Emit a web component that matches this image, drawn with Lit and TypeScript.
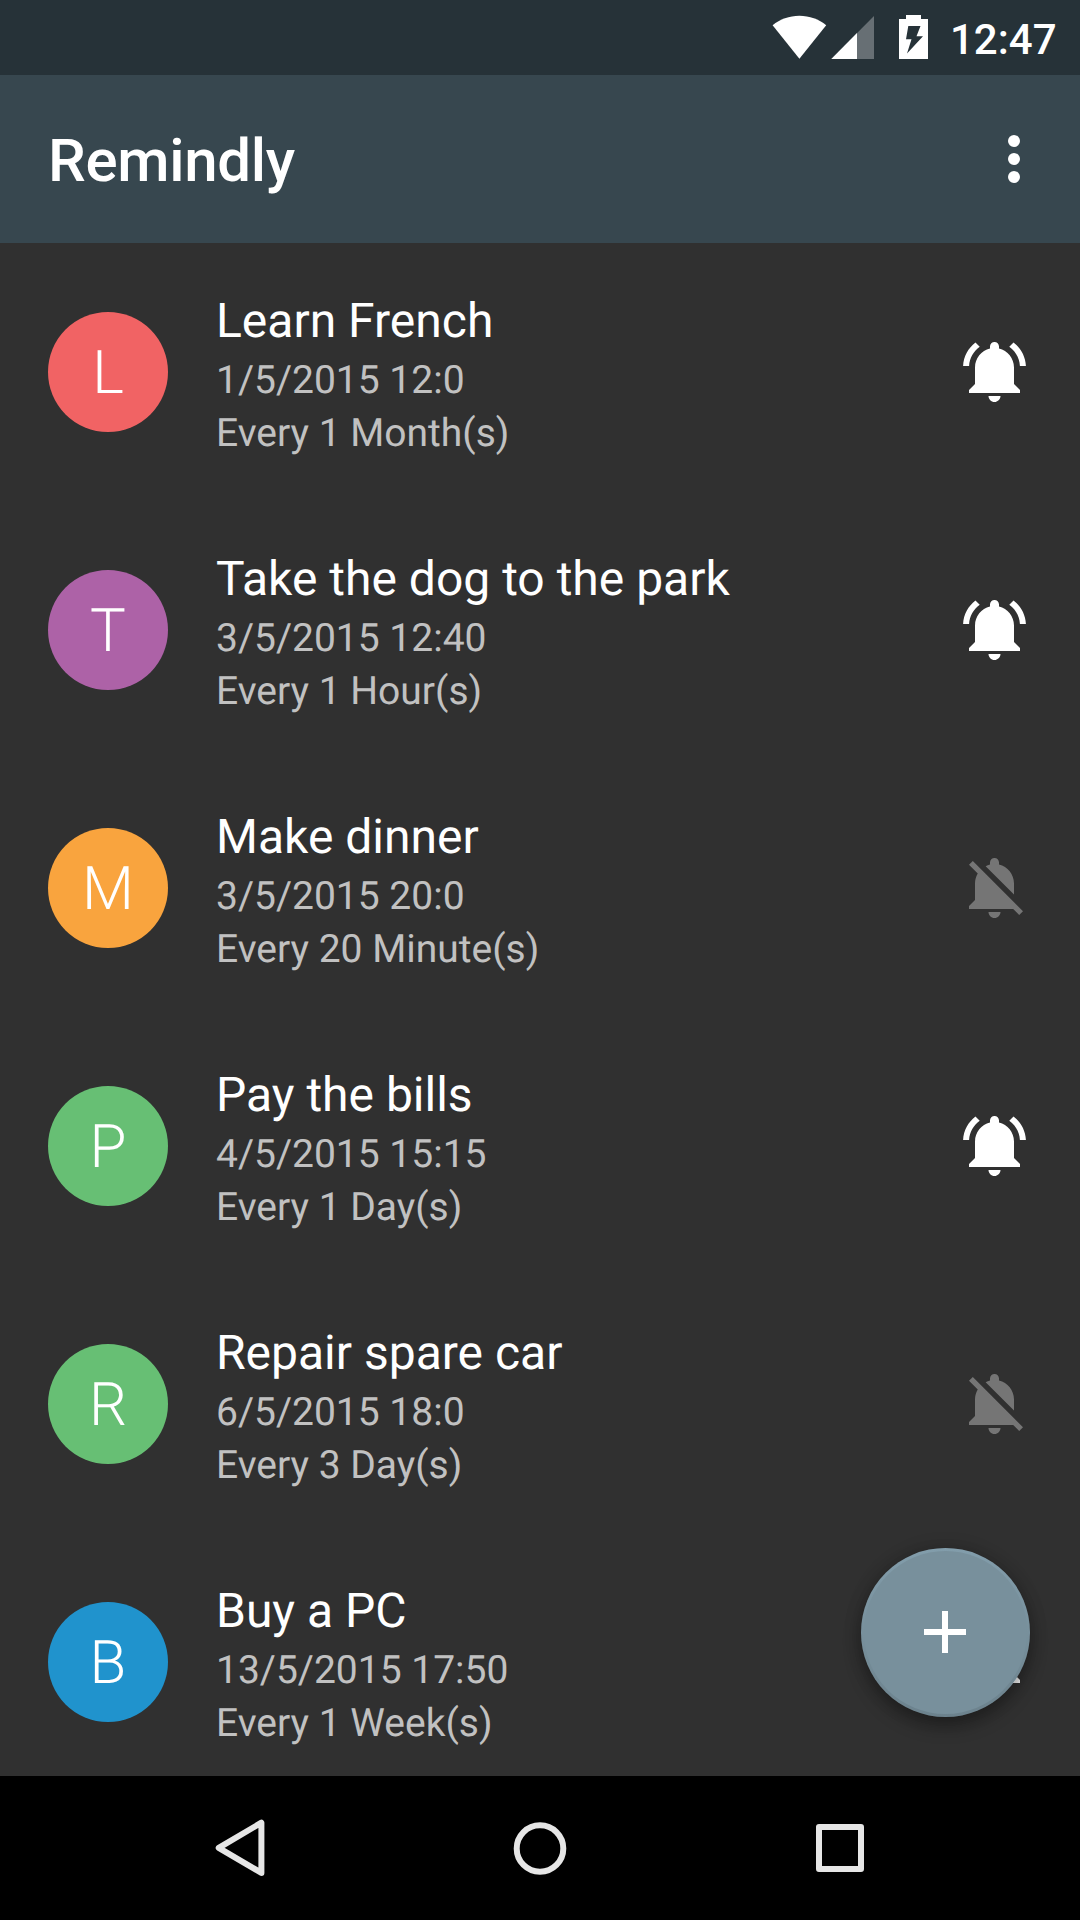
import { LitElement, html, css, svg } from "lit";
import { customElement, property } from "lit/decorators.js";

interface Reminder {
  title: string;
  when: string;
  repeat: string;
  color: string;
  active: boolean;
}

const REMINDERS: Reminder[] = [
  { title: "Learn French", when: "1/5/2015 12:0", repeat: "Every 1 Month(s)", color: "#f16364", active: true },
  { title: "Take the dog to the park", when: "3/5/2015 12:40", repeat: "Every 1 Hour(s)", color: "#ad62a7", active: true },
  { title: "Make dinner", when: "3/5/2015 20:0", repeat: "Every 20 Minute(s)", color: "#f9a43e", active: false },
  { title: "Pay the bills", when: "4/5/2015 15:15", repeat: "Every 1 Day(s)", color: "#67bf74", active: true },
  { title: "Repair spare car", when: "6/5/2015 18:0", repeat: "Every 3 Day(s)", color: "#67bf74", active: false },
  { title: "Buy a PC", when: "13/5/2015 17:50", repeat: "Every 1 Week(s)", color: "#2093cd", active: true },
];

const BELL_ACTIVE = svg`<path d="M6.58 3.58L5.15 2.15C2.76 3.97 1.18 6.8 1.03 10h2c.15-2.65 1.51-4.97 3.55-6.42zM19.97 10h2c-.15-3.2-1.73-6.03-4.13-7.85l-1.42 1.42c2.02 1.45 3.39 3.77 3.55 6.43zm-1.97.5c0-3.07-2.13-5.64-5-6.32V3.5c0-.83-.67-1.5-1.5-1.5S10 2.67 10 3.5v.68c-2.87.68-5 3.25-5 6.32V16l-2 2v1h17v-1l-2-2v-5.5zM11.5 22c.14 0 .27-.01.4-.04.65-.13 1.19-.58 1.44-1.18.1-.24.16-.5.16-.78h-4c.01 1.1.9 2 2 2z"/>`;
const BELL_OFF = svg`<path d="M11.5 22c1.1 0 2-.9 2-2h-4c0 1.1.9 2 2 2zM18 10.5c0-3.07-2.13-5.64-5-6.32V3.5c0-.83-.67-1.5-1.5-1.5S10 2.67 10 3.5v.68c-.51.12-.99.32-1.45.56L18 14.18V10.5zm-.27 8.5l2 2L21 19.73 4.27 3 3 4.27l2.92 2.92C5.34 8.16 5 9.29 5 10.5V16l-2 2v1h14.73z"/>`;

@customElement("status-bar")
class StatusBar extends LitElement {
  static styles = css`
    :host {
      display: flex;
      justify-content: flex-end;
      height: 75px;
      box-sizing: border-box;
      padding-right: 25px;
      background: #263238;
      color: #fff;
    }
    svg {
      display: block;
      height: 75px;
    }
    .time {
      font: 500 42px/80px Roboto, sans-serif;
      width: 105px;
      text-align: right;
      white-space: nowrap;
    }
  `;
  render() {
    return html`
      <svg width="180" height="75" viewBox="770 0 180 75" fill="#fff">
        <path d="M799.4 58.8 772.6 25.3C780 19.2 789.3 15.8 799.4 15.8S818.8 19.2 826.2 25.3Z" />
        <path d="M874 16V59H831.3Z" fill-opacity=".3" />
        <path d="M857 33.1V59H831.3Z" />
        <path
          fill-rule="evenodd"
          d="M906 15H921V19H928V59H899V19H906ZM908.3 26 906 39.300H911.500L907 53.500 923 36.300H916.500L920.500 26Z"
        />
      </svg>
      <span class="time">12:47</span>
    `;
  }
}

@customElement("app-toolbar")
class AppToolbar extends LitElement {
  static styles = css`
    :host {
      display: flex;
      align-items: center;
      justify-content: space-between;
      height: 168px;
      box-sizing: border-box;
      padding: 0 30px 0 48px;
      background: #37474f;
      color: #fff;
    }
    .title {
      margin: 0;
      padding-top: 3px;
      font: 500 60px/70px Roboto, sans-serif;
      letter-spacing: -0.3px;
    }
    .more {
      display: block;
      fill: #fff;
    }
  `;
  render() {
    return html`
      <h1 class="title">Remindly</h1>
      <svg class="more" width="72" height="72" viewBox="0 0 24 24">
        <circle cx="12" cy="6" r="2" />
        <circle cx="12" cy="12" r="2" />
        <circle cx="12" cy="18" r="2" />
      </svg>
    `;
  }
}

@customElement("reminder-row")
class ReminderRow extends LitElement {
  @property({ attribute: false }) reminder!: Reminder;

  static styles = css`
    :host {
      display: flex;
      align-items: center;
      height: 258px;
      flex: none;
      box-sizing: border-box;
      padding: 0 48px;
      font-family: Roboto, sans-serif;
      text-rendering: geometricPrecision;
    }
    .avatar {
      width: 120px;
      height: 120px;
      border-radius: 50%;
      color: #fff;
      font-size: 60px;
      font-weight: 300;
      line-height: 122px;
      text-align: center;
      flex: none;
    }
    .text {
      flex: 1;
      padding-left: 48px;
      padding-top: 7px;
      white-space: nowrap;
    }
    .title {
      color: #fff;
      font-size: 48px;
      line-height: 60px;
      margin-bottom: 3px;
    }
    .detail {
      color: #c1c1c1;
      font-size: 39px;
      line-height: 53px;
    }
    .bell {
      display: block;
      flex: none;
      fill: #757575;
    }
    .bell.on {
      fill: #fff;
    }
  `;
  render() {
    const r = this.reminder;
    return html`
      <div class="avatar" style="background:${r.color}">${r.title[0]}</div>
      <div class="text">
        <div class="title">${r.title}</div>
        <div class="detail">${r.when}</div>
        <div class="detail">${r.repeat}</div>
      </div>
      <svg class="bell ${r.active ? "on" : ""}" width="72" height="72" viewBox="0 0 24 24">
        ${r.active ? BELL_ACTIVE : BELL_OFF}
      </svg>
    `;
  }
}

@customElement("nav-bar")
class NavBar extends LitElement {
  static styles = css`
    :host {
      display: flex;
      align-items: center;
      justify-content: center;
      gap: 156px;
      height: 144px;
      flex: none;
      background: #000;
    }
    svg {
      display: block;
      fill: none;
      stroke: #e6e6e6;
      stroke-width: 6;
      stroke-linejoin: round;
    }
  `;
  render() {
    return html`
      <svg width="144" height="144" viewBox="168 1776 144 144">
        <path d="M218.7 1847.8 261.400 1822.700V1872.900Z" />
      </svg>
      <svg width="144" height="144" viewBox="468 1776 144 144">
        <circle cx="540" cy="1848.5" r="23.3" />
      </svg>
      <svg width="144" height="144" viewBox="768 1776 144 144">
        <rect x="819" y="1827" width="42" height="42" />
      </svg>
    `;
  }
}

@customElement("app-root")
class AppRoot extends LitElement {
  static styles = css`
    :host {
      display: flex;
      flex-direction: column;
      position: relative;
      width: 1080px;
      height: 1920px;
      overflow: hidden;
      background: #303030;
    }
    status-bar,
    app-toolbar {
      flex: none;
    }
    .list {
      display: flex;
      flex-direction: column;
      flex: 1;
      min-height: 0;
      overflow: hidden;
    }
    .fab {
      position: absolute;
      right: 50.5px;
      bottom: 203.5px;
      width: 169px;
      height: 169px;
      padding: 0;
      border: 0;
      border-radius: 50%;
      display: flex;
      align-items: center;
      justify-content: center;
      background: linear-gradient(#829dab, #78909c 50%, #6c828d);
      box-shadow: 0 9px 18px rgba(0, 0, 0, 0.32), 0 0 18px rgba(0, 0, 0, 0.16);
    }
    .face {
      display: flex;
      align-items: center;
      justify-content: center;
      width: 163px;
      height: 163px;
      border-radius: 50%;
      background: #78909c;
    }
    .plus {
      display: block;
      fill: #fff;
    }
  `;
  render() {
    return html`
      <status-bar></status-bar>
      <app-toolbar></app-toolbar>
      <main class="list">
        ${REMINDERS.map((r) => html`<reminder-row .reminder=${r}></reminder-row>`)}
      </main>
      <button class="fab" aria-label="Add">
        <span class="face">
          <svg class="plus" width="72" height="72" viewBox="0 0 24 24">
            <path d="M19 13h-6v6h-2v-6H5v-2h6V5h2v6h6v2z" />
          </svg>
        </span>
      </button>
      <nav-bar></nav-bar>
    `;
  }
}
